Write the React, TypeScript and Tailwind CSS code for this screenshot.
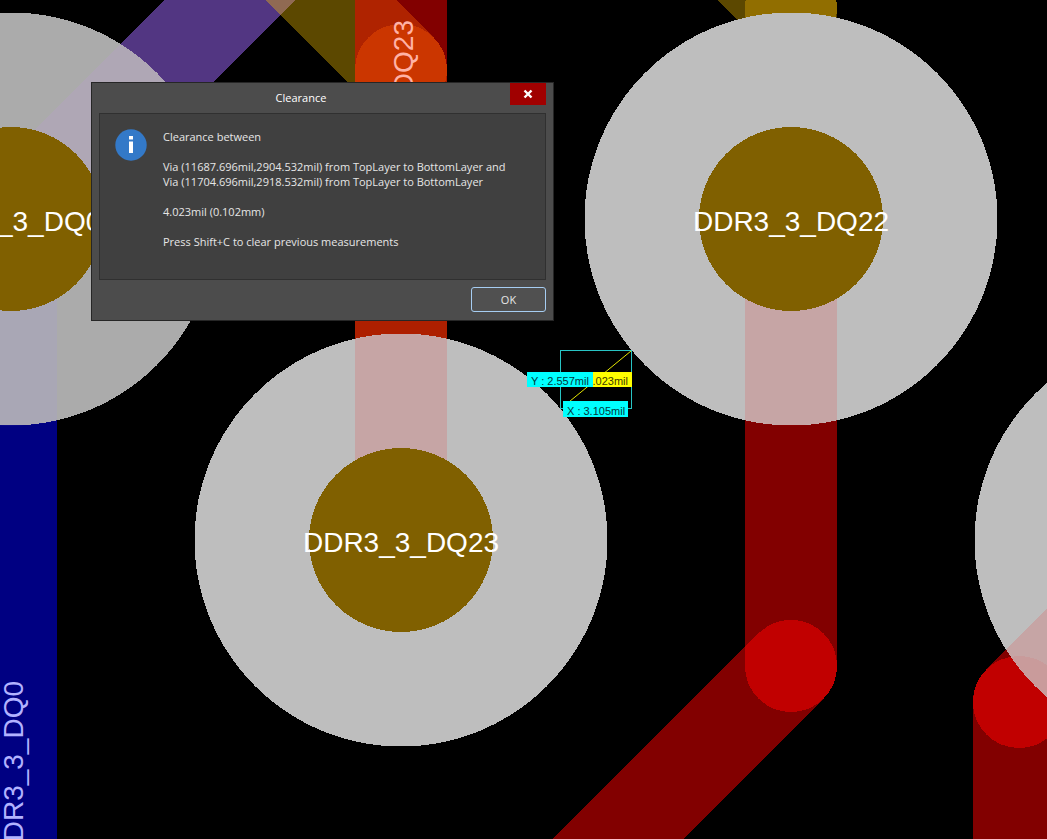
import { useState } from "react";

type Point = [number, number];

type Track = {
  from: Point;
  to: Point;
  color: string;
  alpha: number;
  // how the track shows through a via pad; left out when the pad hides it
  padColor?: string;
  padAlpha?: number;
};

type Via = { x: number; y: number; ring: string; net?: string };

const TRACK_WIDTH = 92;
const RING_RADIUS = 206.5;
const HOLE_RADIUS = 92;

const tracks: Track[] = [
  { from: [11, 219], to: [11, 900], color: "#0000ff", alpha: 0.51, padColor: "#a394ff", padAlpha: 0.13 },
  { from: [11, 219], to: [330, -100], color: "#a069ff", alpha: 0.51, padColor: "#d194ff", padAlpha: 0.13 },
  { from: [231, -100], to: [401, 70], color: "#ffc800", alpha: 0.36 },
  { from: [401, 70], to: [401, 540], color: "#ffb800", alpha: 0.35 },
  { from: [683, -100], to: [791, 8], color: "#ffc800", alpha: 0.36 },
  { from: [791, 8], to: [791, 219], color: "#f4b800", alpha: 0.35 },
  { from: [401, -100], to: [401, 540], color: "#ff0000", alpha: 0.51, padColor: "#ff0000", padAlpha: 0.13 },
  { from: [791, 219], to: [791, 666], color: "#ff0000", alpha: 0.51, padColor: "#ff0000", padAlpha: 0.13 },
  { from: [791, 666], to: [557, 900], color: "#ff0000", alpha: 0.51 },
  { from: [1019, 702], to: [1019, 900], color: "#ff0000", alpha: 0.51, padColor: "#ff0000", padAlpha: 0.06 },
  { from: [1019, 702], to: [1180, 541], color: "#ff0000", alpha: 0.51, padColor: "#ff0000", padAlpha: 0.13 },
];

const vias: Via[] = [
  { x: 11, y: 219, ring: "#ababab", net: "DDR3_3_DQ0" },
  { x: 791, y: 219, ring: "#bebebe", net: "DDR3_3_DQ22" },
  { x: 401, y: 540, ring: "#bebebe", net: "DDR3_3_DQ23" },
  { x: 1181, y: 540, ring: "#bebebe" },
];

type TrackLineProps = { from: Point; to: Point; color: string; alpha: number };

function TrackLine({ from, to, color, alpha }: TrackLineProps) {
  return (
    <line
      x1={from[0]}
      y1={from[1]}
      x2={to[0]}
      y2={to[1]}
      stroke={color}
      strokeOpacity={alpha}
      strokeWidth={TRACK_WIDTH}
      strokeLinecap="round"
    />
  );
}

function Measurement() {
  return (
    <g className="font-['Liberation_Sans',sans-serif] text-[11px]">
      <rect x="560.5" y="350.5" width="71" height="58" fill="none" stroke="#28c4c4" />
      <line x1="631" y1="351" x2="564" y2="406" stroke="#e6e600" />
      <rect x="590" y="372" width="42" height="15" fill="#ffff00" />
      <text x="628" y="385" textAnchor="end" fill="#3a3a00">4.023mil</text>
      <rect x="527" y="372" width="66" height="15" fill="#00ffff" />
      <text x="531" y="385" fill="#00383c">Y : 2.557mil</text>
      <rect x="563" y="401" width="65" height="16" fill="#00ffff" />
      <text x="567" y="415" fill="#00383c">X : 3.105mil</text>
    </g>
  );
}

function Board() {
  return (
    <svg className="absolute inset-0 h-full w-full" aria-label="PCB layout">
      <defs>
        <clipPath id="pads">
          {vias.map((via) => (
            <circle key={via.net ?? "none"} cx={via.x} cy={via.y} r={RING_RADIUS} />
          ))}
        </clipPath>
      </defs>

      <g shapeRendering="crispEdges">
        {tracks.map((t, i) => (
          <TrackLine key={i} from={t.from} to={t.to} color={t.color} alpha={t.alpha} />
        ))}
        {vias.map((via) => (
          <circle key={via.net ?? "none"} cx={via.x} cy={via.y} r={RING_RADIUS} fill={via.ring} />
        ))}
        {/* tracks shine faintly through the pads */}
        <g clipPath="url(#pads)">
          {tracks.map((t, i) => t.padColor && t.padAlpha && (
            <TrackLine key={i} from={t.from} to={t.to} color={t.padColor} alpha={t.padAlpha} />
          ))}
        </g>
        {vias.map((via) => (
          <circle key={via.net ?? "none"} cx={via.x} cy={via.y} r={HOLE_RADIUS} fill="#806000" />
        ))}
      </g>

      <g className="font-['Liberation_Sans',sans-serif] text-[28px]">
        {vias.map((via) => via.net && (
          <text key={via.net} x={via.x} y={via.y + 12} textAnchor="middle" fill="#ffffff">
            {via.net}
          </text>
        ))}
        <text transform="translate(413 20) rotate(-90)" textAnchor="end" fill="#ffb2a6">
          DDR3_3_DQ23
        </text>
        <text transform="translate(23 681) rotate(-90)" textAnchor="end" fill="#b2b2ff">
          DDR3_3_DQ0
        </text>
      </g>

      <Measurement />
    </svg>
  );
}

function InfoIcon() {
  return (
    <svg className="h-8 w-8 shrink-0" viewBox="0 0 32 32" aria-hidden="true">
      <circle cx="16" cy="16" r="15.7" fill="#3379c8" />
      <rect x="14" y="7" width="4" height="3.5" fill="#fff" />
      <rect x="14" y="12.5" width="4" height="11.5" fill="#fff" />
    </svg>
  );
}

function ClearanceDialog({ onClose }: { onClose: () => void }) {
  return (
    <div
      role="dialog"
      aria-labelledby="dialog-title"
      className="absolute left-[91px] top-[82px] w-[463px] border border-[#262626] bg-[#4c4c4c] font-['Open_Sans','Noto_Sans',sans-serif] text-[11px] leading-[15px] text-[#e6e6e6]"
    >
      <div className="flex h-[30px] items-start pr-[7px]">
        <h1 id="dialog-title" className="flex-1 pt-[7px] text-center text-white">Clearance</h1>
        <button
          type="button"
          aria-label="Close"
          onClick={onClose}
          className="flex h-[22px] w-9 items-center justify-center bg-[#a00000] hover:bg-[#c00000]"
        >
          <svg className="h-2.5 w-2.5" viewBox="0 0 10 10" aria-hidden="true">
            <path d="M1.5 1.5 L8.5 8.5 M8.5 1.5 L1.5 8.5" stroke="#fff" strokeWidth="2.4" />
          </svg>
        </button>
      </div>

      <div className="mx-[7px] flex min-h-[167px] gap-4 border border-[#303030] bg-[#404040] px-[15px] pt-[15px]">
        <InfoIcon />
        <div className="space-y-[15px] whitespace-nowrap">
          <p>Clearance between</p>
          <p>
            Via (11687.696mil,2904.532mil) from TopLayer to BottomLayer and
            <br />
            Via (11704.696mil,2918.532mil) from TopLayer to BottomLayer
          </p>
          <p>4.023mil (0.102mm)</p>
          <p>Press Shift+C to clear previous measurements</p>
        </div>
      </div>

      <div className="flex justify-end px-[7px] pb-2 pt-[7px]">
        <button
          type="button"
          onClick={onClose}
          className="h-[25px] w-[75px] rounded-[3px] border border-[#a6cdf2] bg-[#505050] hover:bg-[#5a5a5a]"
        >
          OK
        </button>
      </div>
    </div>
  );
}

export default function App() {
  const [open, setOpen] = useState(true);

  return (
    <main className="relative min-h-screen overflow-hidden bg-black">
      <Board />
      {open && <ClearanceDialog onClose={() => setOpen(false)} />}
    </main>
  );
}
